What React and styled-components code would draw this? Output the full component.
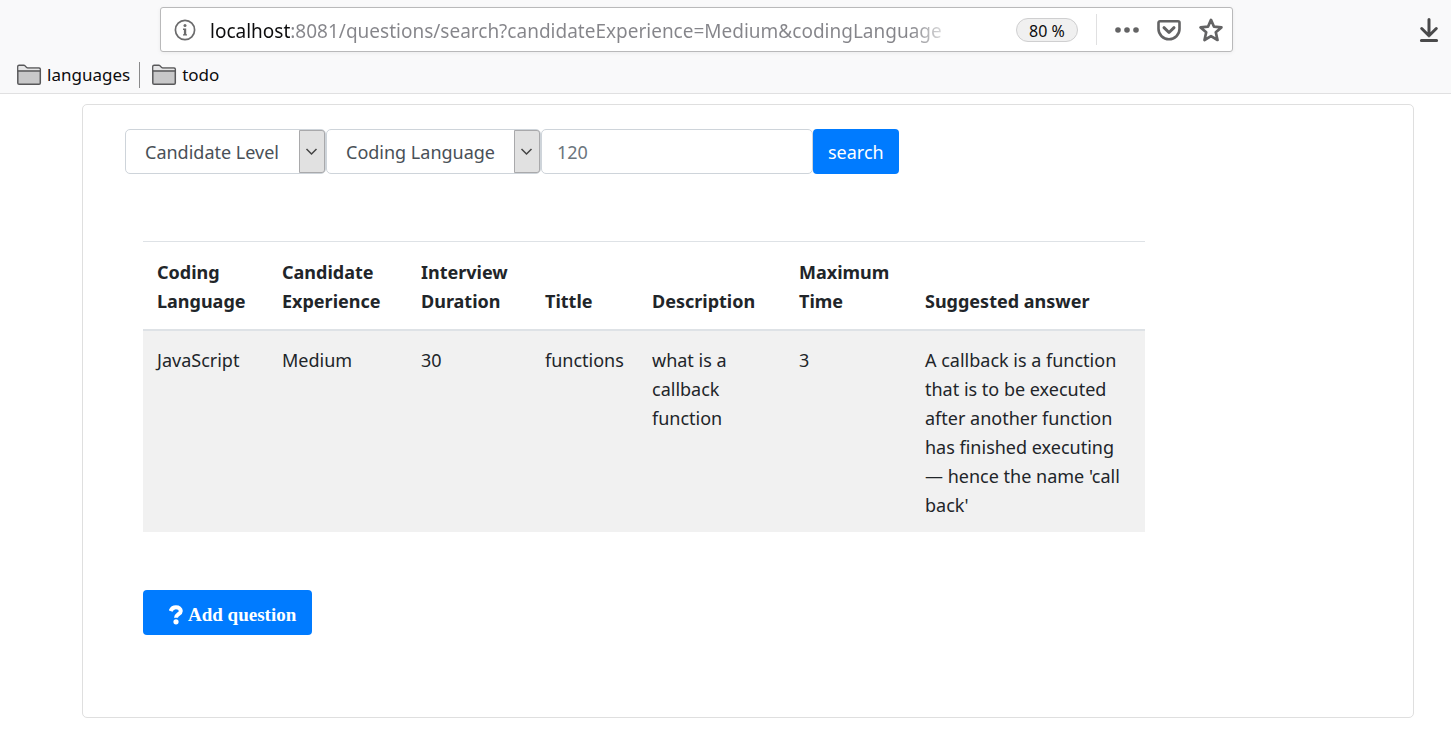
import React from "react";
import styled, { createGlobalStyle, css } from "styled-components";

const GlobalStyle = createGlobalStyle`
  *, *::before, *::after { box-sizing: border-box; }
  body {
    margin: 0;
    background: #fff;
    color: #212529;
    font-family: "Noto Sans", "Open Sans", sans-serif;
    font-size: 18px;
    line-height: 29px;
  }
  button, input, select { font: inherit; margin: 0; }
`;

const Chrome = styled.header`
  background: #f9f9fa;
  border-bottom: 1px solid #e0e0e1;
`;

const NavigationRow = styled.div`
  display: flex;
  align-items: center;
  padding: 7px 12px 0 160px;
`;

const AddressBar = styled.div`
  flex: 1;
  min-width: 0;
  height: 45px;
  display: flex;
  align-items: center;
  padding: 0 9px 0 13px;
  background: #fff;
  border: 1px solid #b9b9ba;
  border-radius: 3px;
  box-shadow: 0 1px 4px rgba(0, 0, 0, 0.06);
`;

const AddressInput = styled.input`
  flex: 1;
  min-width: 0;
  height: 40px;
  margin: 0 60px 0 14px;
  padding: 2px 0 0;
  border: 0;
  outline: 0;
  font-size: 19px;
  color: transparent;
  caret-color: #0c0c0d;
  background: linear-gradient(
    to right,
    #0c0c0d 80px,
    #85858a 80px,
    #85858a calc(100% - 46px),
    transparent
  );
  background-clip: text;
  -webkit-background-clip: text;
`;

const IconButton = styled.button`
  display: flex;
  align-items: center;
  justify-content: center;
  flex: none;
  padding: 0;
  border: 0;
  background: none;
  color: ${(p) => p.$color || "#636364"};
`;

const ZoomBadge = styled.button`
  flex: none;
  width: 62px;
  height: 24px;
  padding: 2px 0 0;
  border: 1px solid #cfcfd0;
  border-radius: 12px;
  background: #f0f0f0;
  color: #0c0c0d;
  font-size: 16px;
  line-height: 20px;
`;

const PageActions = styled.div`
  display: flex;
  align-items: center;
  gap: 18px;
  height: 31px;
  margin-left: 18px;
  padding-left: 18px;
  border-left: 1px solid #e0e0e1;
`;

const DownloadArea = styled.div`
  display: flex;
  justify-content: flex-end;
  width: 206px;
`;

const BookmarksRow = styled.nav`
  display: flex;
  align-items: center;
  height: 41px;
  padding: 5px 16px 0;
`;

const Bookmark = styled.button`
  display: flex;
  align-items: center;
  gap: 5px;
  height: 26px;
  padding: 0;
  border: 0;
  background: none;
  color: #0c0c0d;
  font-size: 17px;
  line-height: 26px;
  & + & {
    margin-left: 9px;
    padding-left: 11px;
    border-left: 1px solid #8a8a8b;
  }
`;

const Card = styled.main`
  margin: 10px 37px 20px 82px;
  padding: 24px 42px 82px;
  border: 1px solid #dfdfdf;
  border-radius: 5px;
`;

const SearchForm = styled.form`
  display: flex;
`;

const control = css`
  height: 45px;
  border: 1px solid #ced4da;
  border-radius: 5px;
  background: #fff;
  color: #495057;
`;

const SelectBox = styled.div`
  display: grid;
  align-items: center;
  width: ${(p) => p.$width}px;
  & > * { grid-area: 1 / 1; }
`;

const Select = styled.select`
  ${control}
  width: 100%;
  padding: 2px 30px 0 19px;
  appearance: none;
`;

const SelectArrow = styled.span`
  justify-self: end;
  display: flex;
  align-items: center;
  justify-content: center;
  width: 26px;
  height: 43px;
  margin-right: 1px;
  padding-right: 2px;
  border: 1px solid #a9a9ab;
  border-radius: 0 3px 3px 0;
  background: #e1e1e1;
  pointer-events: none;
`;

const DurationInput = styled.input`
  ${control}
  width: 272px;
  padding: 0 15px;
  &::placeholder { color: #6c757d; opacity: 1; }
`;

const PrimaryButton = styled.button`
  height: 45px;
  padding: 2px 15px 0;
  border: 0;
  border-radius: 4px;
  background: #007bff;
  color: #fff;
`;

const AddButton = styled(PrimaryButton)`
  display: flex;
  align-items: center;
  gap: 4px;
  margin: 58px 0 0 18px;
  padding: 4px 16px 0 26px;
  font-family: "Liberation Serif", serif;
  font-size: 19px;
  font-weight: 700;
`;

const Table = styled.table`
  width: 100%;
  max-width: 1002px;
  margin: 67px 0 0 18px;
  border-collapse: separate;
  border-spacing: 0;
  table-layout: fixed;
`;

const Col = styled.col`
  width: ${(p) => p.$width}px;
`;

const HeadCell = styled.th`
  padding: 16px 14px 13px;
  border-top: 1px solid #dee2e6;
  border-bottom: 2px solid #dee2e6;
  text-align: left;
  vertical-align: bottom;
  font-weight: 700;
`;

const Cell = styled.td`
  padding: 15px 14px 12px;
  background: #f1f1f1;
  vertical-align: top;
`;

const InfoIcon = () => (
  <svg width="22" height="22" viewBox="0 0 22 22" fill="none" aria-hidden="true">
    <circle cx="11" cy="11" r="9.6" stroke="#6b6b6c" strokeWidth="1.7" />
    <circle cx="11" cy="6.6" r="1.5" fill="#6b6b6c" />
    <path d="M9 9.6h3.2v5.6H13v1.3H9v-1.3h.9v-4.3H9z" fill="#6b6b6c" />
  </svg>
);

const DotsIcon = () => (
  <svg width="24" height="24" viewBox="0 0 24 24" fill="currentColor" aria-hidden="true">
    <circle cx="3" cy="12" r="2.8" />
    <circle cx="12" cy="12" r="2.8" />
    <circle cx="21" cy="12" r="2.8" />
  </svg>
);

const PocketIcon = () => (
  <svg width="24" height="24" viewBox="0 0 24 24" fill="none" stroke="currentColor" strokeWidth="2.6" strokeLinecap="round" strokeLinejoin="round" aria-hidden="true">
    <path d="M3 3.3h18c.9 0 1.5.5 1.5 1.4V11a10.5 10.2 0 0 1-21 0V4.700c0-.9.600-1.400 1.500-1.400z" />
    <path d="M7 9.700l5 4.800 5-4.800" strokeWidth="3" />
  </svg>
);

const StarIcon = () => (
  <svg width="24" height="24" viewBox="0 0 24 24" fill="none" stroke="currentColor" strokeWidth="2.7" strokeLinejoin="round" aria-hidden="true">
    <path d="M12 1.900l3 6.800 7.400.7-5.600 4.900 1.700 7.700-6.500-3.900L5.500 22l1.700-7.700L1.600 9.400 9 8.700z" />
  </svg>
);

const DownloadIcon = () => (
  <svg width="20" height="24" viewBox="0 0 20 24" fill="none" stroke="currentColor" strokeWidth="3" strokeLinecap="round" strokeLinejoin="round" aria-hidden="true">
    <path d="M10 1.500v16M2.700 10.500l7.300 7.300 7.300-7.300M2.400 22.500h15.200" />
  </svg>
);

const FolderIcon = () => (
  <svg width="26" height="22" viewBox="0 0 26 22" fill="#c8c8c9" stroke="#58585a" strokeWidth="1.5" strokeLinejoin="round" aria-hidden="true">
    <path d="M1.800 19V2.600c0-.9.500-1.300 1.300-1.300H8c1.500 0 2 2.700 3.700 2.700h11.400c.8 0 1.200.5 1.200 1.300V19c0 .9-.5 1.300-1.300 1.300H3.100c-.8 0-1.300-.4-1.300-1.300z" />
    <path d="M2.500 6.200V3c0-.6.300-.9.800-.9h4.400c1 0 1.700 2.700 3.700 2.700h11.300c.6 0 .8.300.8.800v.6z" fill="#e6e6e7" stroke="none" />
    <path d="M1.800 7h22.500" />
  </svg>
);

const ChevronIcon = () => (
  <svg width="13" height="8" viewBox="0 0 13 8" fill="none" stroke="#444" strokeWidth="1.500" aria-hidden="true">
    <path d="M1.500 1l5 5 5-5" />
  </svg>
);

const QuestionIcon = () => (
  <svg width="15" height="20" viewBox="0 0 15 20" fill="none" stroke="#fff" strokeWidth="4" aria-hidden="true">
    <path d="M1.600 6C2.600 3.400 4.400 2.200 6.900 2.200c2.900 0 4.900 1.500 4.900 3.700 0 3.300-4.800 3.300-4.800 6.900" />
    <circle cx="7" cy="16.800" r="2.600" fill="#fff" stroke="none" />
  </svg>
);

const columns = [
  { title: "Coding Language", width: 125 },
  { title: "Candidate Experience", width: 139 },
  { title: "Interview Duration", width: 124 },
  { title: "Tittle", width: 107 },
  { title: "Description", width: 147 },
  { title: "Maximum Time", width: 126 },
  { title: "Suggested answer", width: 234 },
];

const rows = [
  [
    "JavaScript",
    "Medium",
    "30",
    "functions",
    "what is a callback function",
    "3",
    "A callback is a function that is to be executed after another function has finished executing — hence the name 'call back'",
  ],
];

function SelectField({ label, width }) {
  return (
    <SelectBox $width={width}>
      <Select aria-label={label} defaultValue="">
        <option value="">{label}</option>
      </Select>
      <SelectArrow>
        <ChevronIcon />
      </SelectArrow>
    </SelectBox>
  );
}

export default function App() {
  return (
    <>
      <GlobalStyle />
      <Chrome>
        <NavigationRow>
          <AddressBar>
            <IconButton aria-label="Site information">
              <InfoIcon />
            </IconButton>
            <AddressInput
              aria-label="Address"
              spellCheck={false}
              defaultValue="localhost:8081/questions/search?candidateExperience=Medium&codingLanguage"
            />
            <ZoomBadge>80 %</ZoomBadge>
            <PageActions>
              <IconButton aria-label="Page actions">
                <DotsIcon />
              </IconButton>
              <IconButton aria-label="Save to Pocket">
                <PocketIcon />
              </IconButton>
              <IconButton aria-label="Bookmark this page">
                <StarIcon />
              </IconButton>
            </PageActions>
          </AddressBar>
          <DownloadArea>
            <IconButton aria-label="Downloads" $color="#4a4a4b">
              <DownloadIcon />
            </IconButton>
          </DownloadArea>
        </NavigationRow>
        <BookmarksRow aria-label="Bookmarks">
          <Bookmark>
            <FolderIcon />
            languages
          </Bookmark>
          <Bookmark>
            <FolderIcon />
            todo
          </Bookmark>
        </BookmarksRow>
      </Chrome>
      <Card>
        <SearchForm onSubmit={(e) => e.preventDefault()}>
          <SelectField label="Candidate Level" width={201} />
          <SelectField label="Coding Language" width={215} />
          <DurationInput aria-label="Interview duration" placeholder="120" />
          <PrimaryButton type="submit">search</PrimaryButton>
        </SearchForm>
        <Table>
          <colgroup>
            {columns.map((c) => (
              <Col key={c.title} $width={c.width} />
            ))}
          </colgroup>
          <thead>
            <tr>
              {columns.map((c) => (
                <HeadCell key={c.title} scope="col">
                  {c.title}
                </HeadCell>
              ))}
            </tr>
          </thead>
          <tbody>
            {rows.map((row, i) => (
              <tr key={i}>
                {row.map((text, j) => (
                  <Cell key={j}>{text}</Cell>
                ))}
              </tr>
            ))}
          </tbody>
        </Table>
        <AddButton type="button">
          <QuestionIcon />
          Add question
        </AddButton>
      </Card>
    </>
  );
}
